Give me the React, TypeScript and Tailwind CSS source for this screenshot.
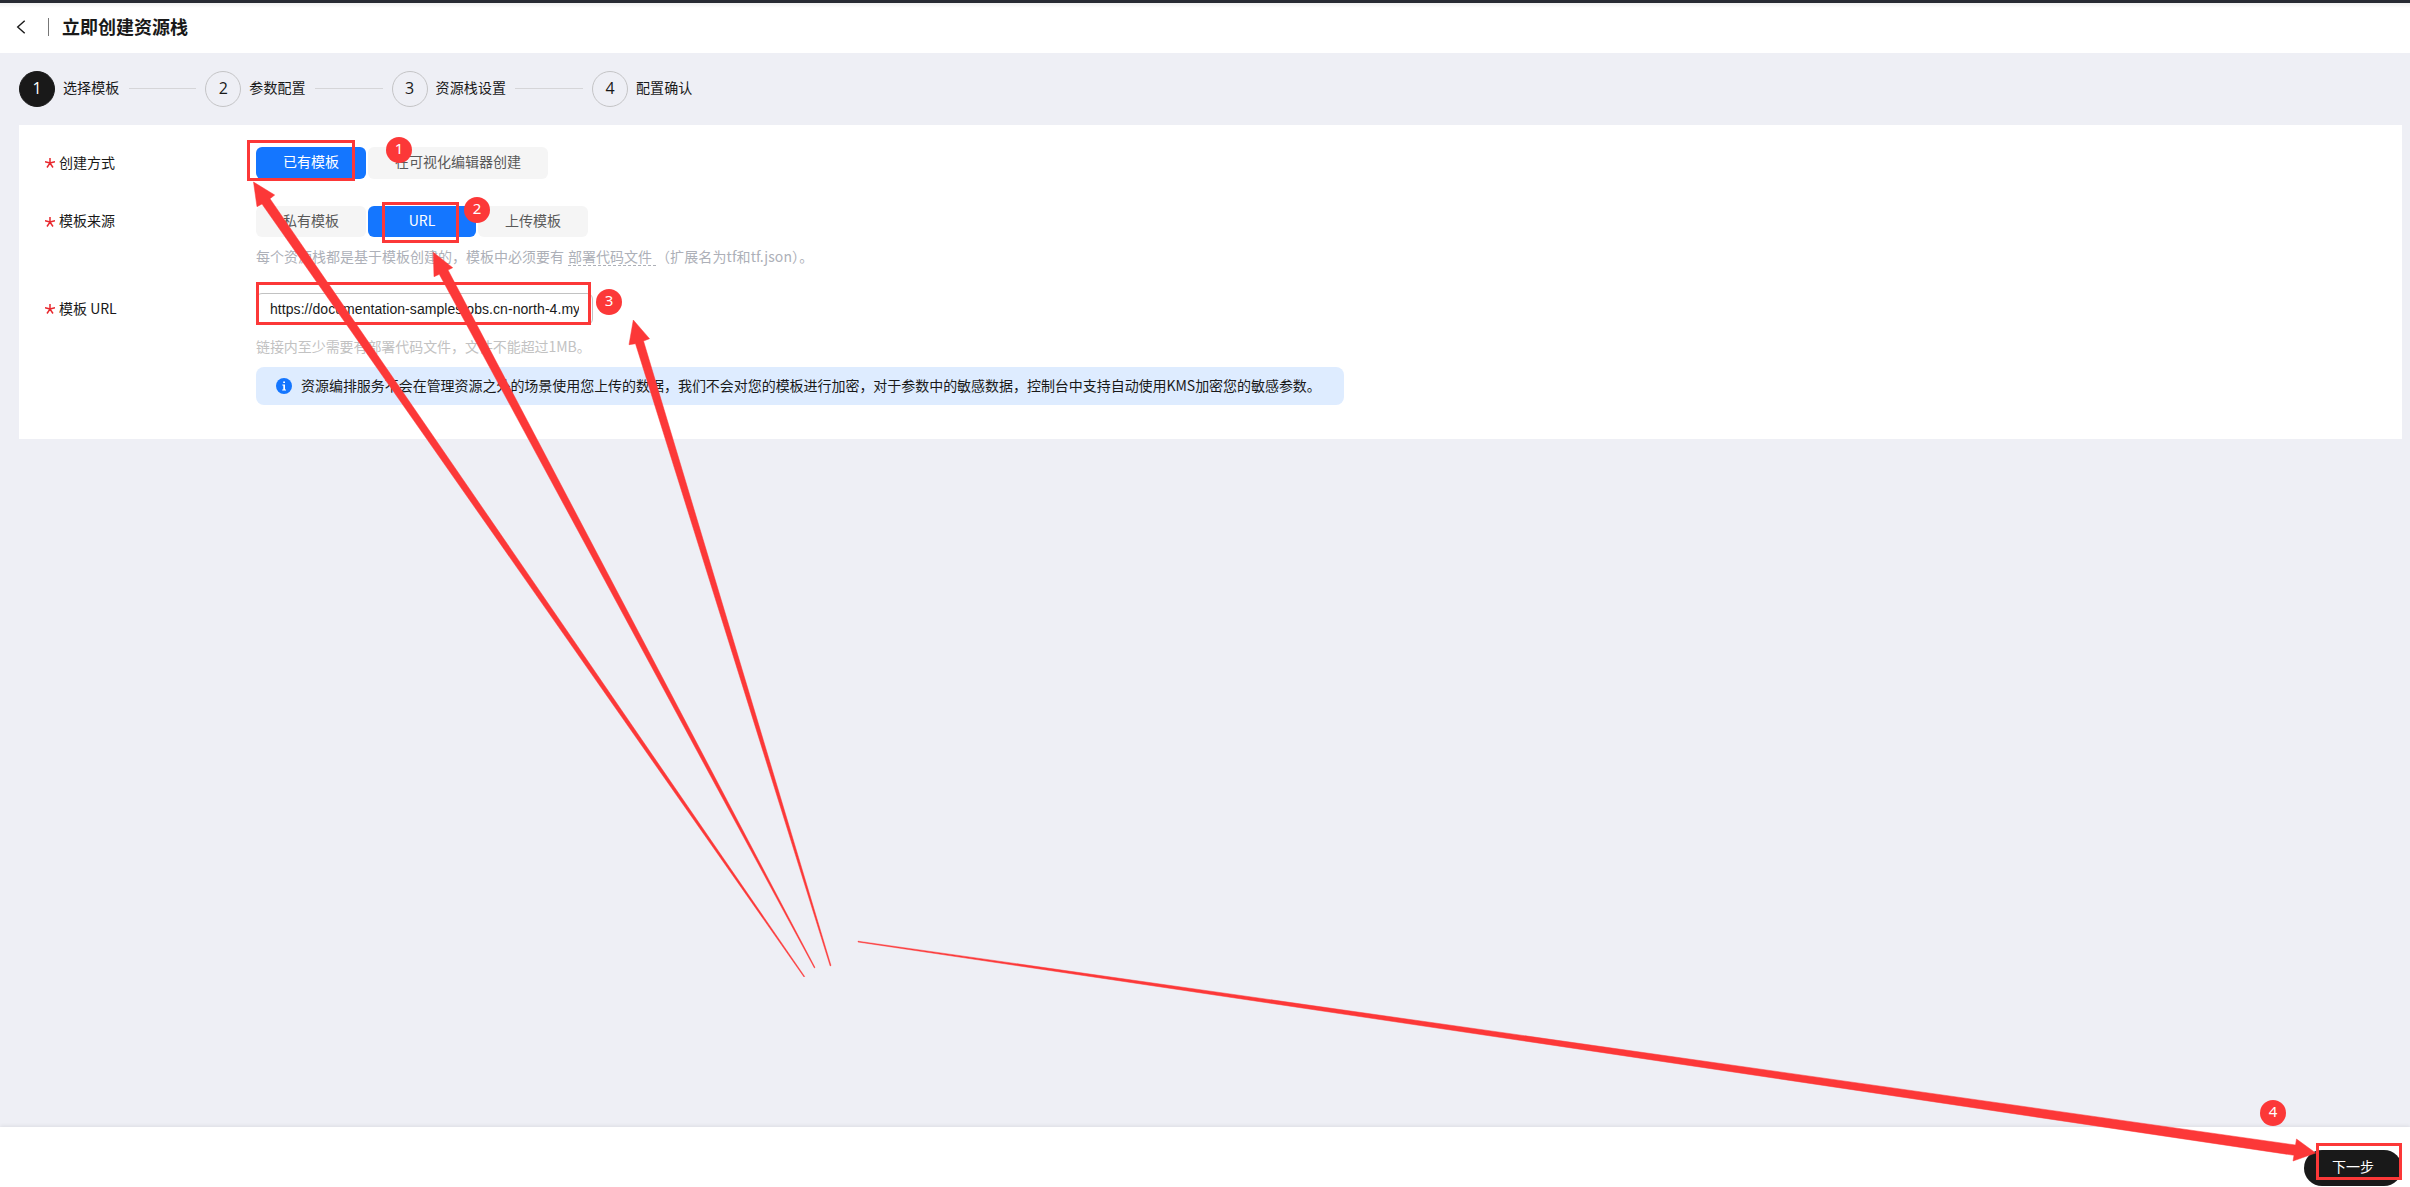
import React from "react";

const steps = ["选择模板", "参数配置", "资源栈设置", "配置确认"];

const arrows = [
  "253.5,182 274.7,195 270,198.7 804.6,976.4 804,977 262,204 257,206.7",
  "433.3,252.3 452.7,267.7 448,270 815,967.5 814.4,968 439.3,274.3 434,276.7",
  "633.3,320 649.5,338.7 643.5,341 831,965.5 830.2,966 635.5,343.7 629,344.7",
  "2315.7,1153 2293,1161 2294,1155.3 858,942 858,941.2 2295.5,1145 2296.5,1139",
];

function Label({ children }: { children: React.ReactNode }) {
  return (
    <div className="flex w-[211px] shrink-0 items-center text-[#191919]">
      <svg className="mr-[4px] h-[10px] w-[10px]" viewBox="0 0 10 10" stroke="#e8282e" strokeWidth="1.5" fill="none">
        <path d="M5 0V5M0 3.6L5 5L10 3.6M2 9.5L5 5L8 9.5" />
      </svg>
      <span className="pb-[3px]">{children}</span>
    </div>
  );
}

function Option({ active, className, children }: { active?: boolean; className: string; children: React.ReactNode }) {
  return (
    <button
      className={`flex h-full items-center justify-center rounded-[6px] pb-[4px] ${active ? "bg-[#1476ff] text-white" : "bg-[#f5f5f5] text-[#595959]"} ${className}`}
    >
      {children}
    </button>
  );
}

function Badge({ className, children }: { className: string; children: React.ReactNode }) {
  return (
    <div
      className={`absolute flex h-[26px] w-[26px] items-start justify-center rounded-full bg-[#fc3838] font-['Noto_Sans',sans-serif] text-[15px] leading-[23px] text-white ${className}`}
    >
      {children}
    </div>
  );
}

export default function App() {
  return (
    <div className="relative flex h-[1187px] w-[2410px] flex-col overflow-hidden bg-[#eeeff5] font-['Noto_Sans_CJK_SC',sans-serif] text-[14px] leading-5 text-[#191919]">
      <div className="h-[3px] shrink-0 bg-[#282b33]" />
      <header className="flex h-[50px] shrink-0 items-center bg-white bg-linear-to-b from-[#f0f0f0] via-white via-10% to-white pb-[2px] pl-[16px]">
        <svg className="h-[14px] w-[10px]" viewBox="0 0 10 14" fill="none" stroke="#191919" strokeWidth="1.4">
          <path d="M8.7 .7L1.7 7L8.7 13.3" />
        </svg>
        <div className="ml-[22px] h-[18px] w-px bg-[#777777]" />
        <h1 className="ml-[13px] pb-[2px] text-[18px] font-bold leading-[26px]">立即创建资源栈</h1>
      </header>

      <nav className="flex h-[72px] shrink-0 items-center pl-[19px]">
        {steps.map((s, i) => (
          <div key={s} className="flex items-center">
            <div
              className={`flex h-[36px] w-[36px] items-center justify-center rounded-full border pb-[2px] font-['Open_Sans',sans-serif] text-[16px] ${i === 0 ? "border-[#191919] bg-[#191919] text-white" : "border-[#c4c4c6]"}`}
            >
              {i + 1}
            </div>
            <span className="ml-[8px] pb-[4px] tracking-[0.1px]">{s}</span>
            {i < 3 && <div className="mr-[9px] mb-px ml-[9.3px] h-px w-[67.6px] bg-[#d5d5d8]" />}
          </div>
        ))}
      </nav>

      <main className="mr-[8px] ml-[19px] flex h-[314px] shrink-0 flex-col bg-white pt-[22px] pl-[26px]">
        <div className="flex h-[32px]">
          <Label>创建方式</Label>
          <div className="flex gap-[2px]">
            <Option active className="w-[110px]">已有模板</Option>
            <Option className="w-[180px]">在可视化编辑器创建</Option>
          </div>
        </div>
        <div className="mt-[27px] flex h-[31px]">
          <Label>模板来源</Label>
          <div className="flex gap-[2px]">
            <Option className="w-[110px]">私有模板</Option>
            <Option active className="w-[108px]">URL</Option>
            <Option className="w-[110px]">上传模板</Option>
          </div>
        </div>
        <p className="mt-[9px] ml-[211px] flex h-[20px] whitespace-pre text-[#adb0b8]">
          <span className="w-[312px]">每个资源栈都是基于模板创建的，模板中必须要有</span>
          <span className="h-[20px] w-[88px] border-b border-dashed border-[#adb0b8]">部署代码文件</span>
          <span className="tracking-[0.1px]">（扩展名为tf和tf.json）。</span>
        </p>
        <div className="mt-[27px] flex h-[32px]">
          <Label>模板 URL</Label>
          <div className="flex w-[337px] items-center rounded-[6px] border border-[#c2c2c2] px-[13px]">
            <span className="w-[309px] overflow-hidden whitespace-nowrap font-['Liberation_Sans',sans-serif] tracking-[0.06px]">
              https://documentation-samples.obs.cn-north-4.my
            </span>
          </div>
        </div>
        <p className="mt-[11px] ml-[211px] h-[20px] tracking-[-0.07px] text-[#c2c2c2]">链接内至少需要有部署代码文件，文件不能超过1MB。</p>
        <div className="mt-[11px] ml-[211px] flex h-[38px] w-[1088px] items-center rounded-[8px] bg-[#deecff] pl-[20px]">
          <svg className="mr-[9px] h-4 w-4" viewBox="0 0 16 16">
            <circle cx="8" cy="8" r="8" fill="#1476ff" />
            <path d="M7.2 3.5h1.8v1.6H7.2zM6.3 6.4H9v5.2h1v1H6.2v-1h1.1V7.4h-1z" fill="#fff" />
          </svg>
          <span className="pb-[2px] tracking-[-0.04px] whitespace-nowrap">
            资源编排服务不会在管理资源之外的场景使用您上传的数据，我们不会对您的模板进行加密，对于参数中的敏感数据，控制台中支持自动使用KMS加密您的敏感参数。
          </span>
        </div>
      </main>

      <footer className="mt-auto flex h-[60px] shrink-0 justify-end bg-white pt-[23px] pr-[8px] shadow-[0_-1px_4px_rgba(0,0,0,0.08)]">
        <button className="flex h-[36px] w-[98px] items-center justify-center rounded-full bg-[#191919] pb-[4px] text-white">下一步</button>
      </footer>

      <div className="absolute top-[140px] left-[247px] h-[41px] w-[108px] border-3 border-[#fc3838]" />
      <div className="absolute top-[202px] left-[382px] h-[41px] w-[77px] border-3 border-[#fc3838]" />
      <div className="absolute top-[282px] left-[256px] h-[43px] w-[335px] border-3 border-[#fc3838]" />
      <div className="absolute top-[1143px] left-[2316px] h-[37px] w-[86px] border-3 border-[#fc3838]" />
      <svg className="absolute inset-0 h-[1187px] w-[2410px]" viewBox="0 0 2410 1187" fill="#fc3838" stroke="#fc3838" strokeWidth="0.5">
        {arrows.map((p) => (
          <polygon key={p} points={p} />
        ))}
      </svg>
      <Badge className="top-[137px] left-[386px]">1</Badge>
      <Badge className="top-[197px] left-[464px]">2</Badge>
      <Badge className="top-[289px] left-[596px]">3</Badge>
      <Badge className="top-[1100px] left-[2260px]">4</Badge>
    </div>
  );
}
